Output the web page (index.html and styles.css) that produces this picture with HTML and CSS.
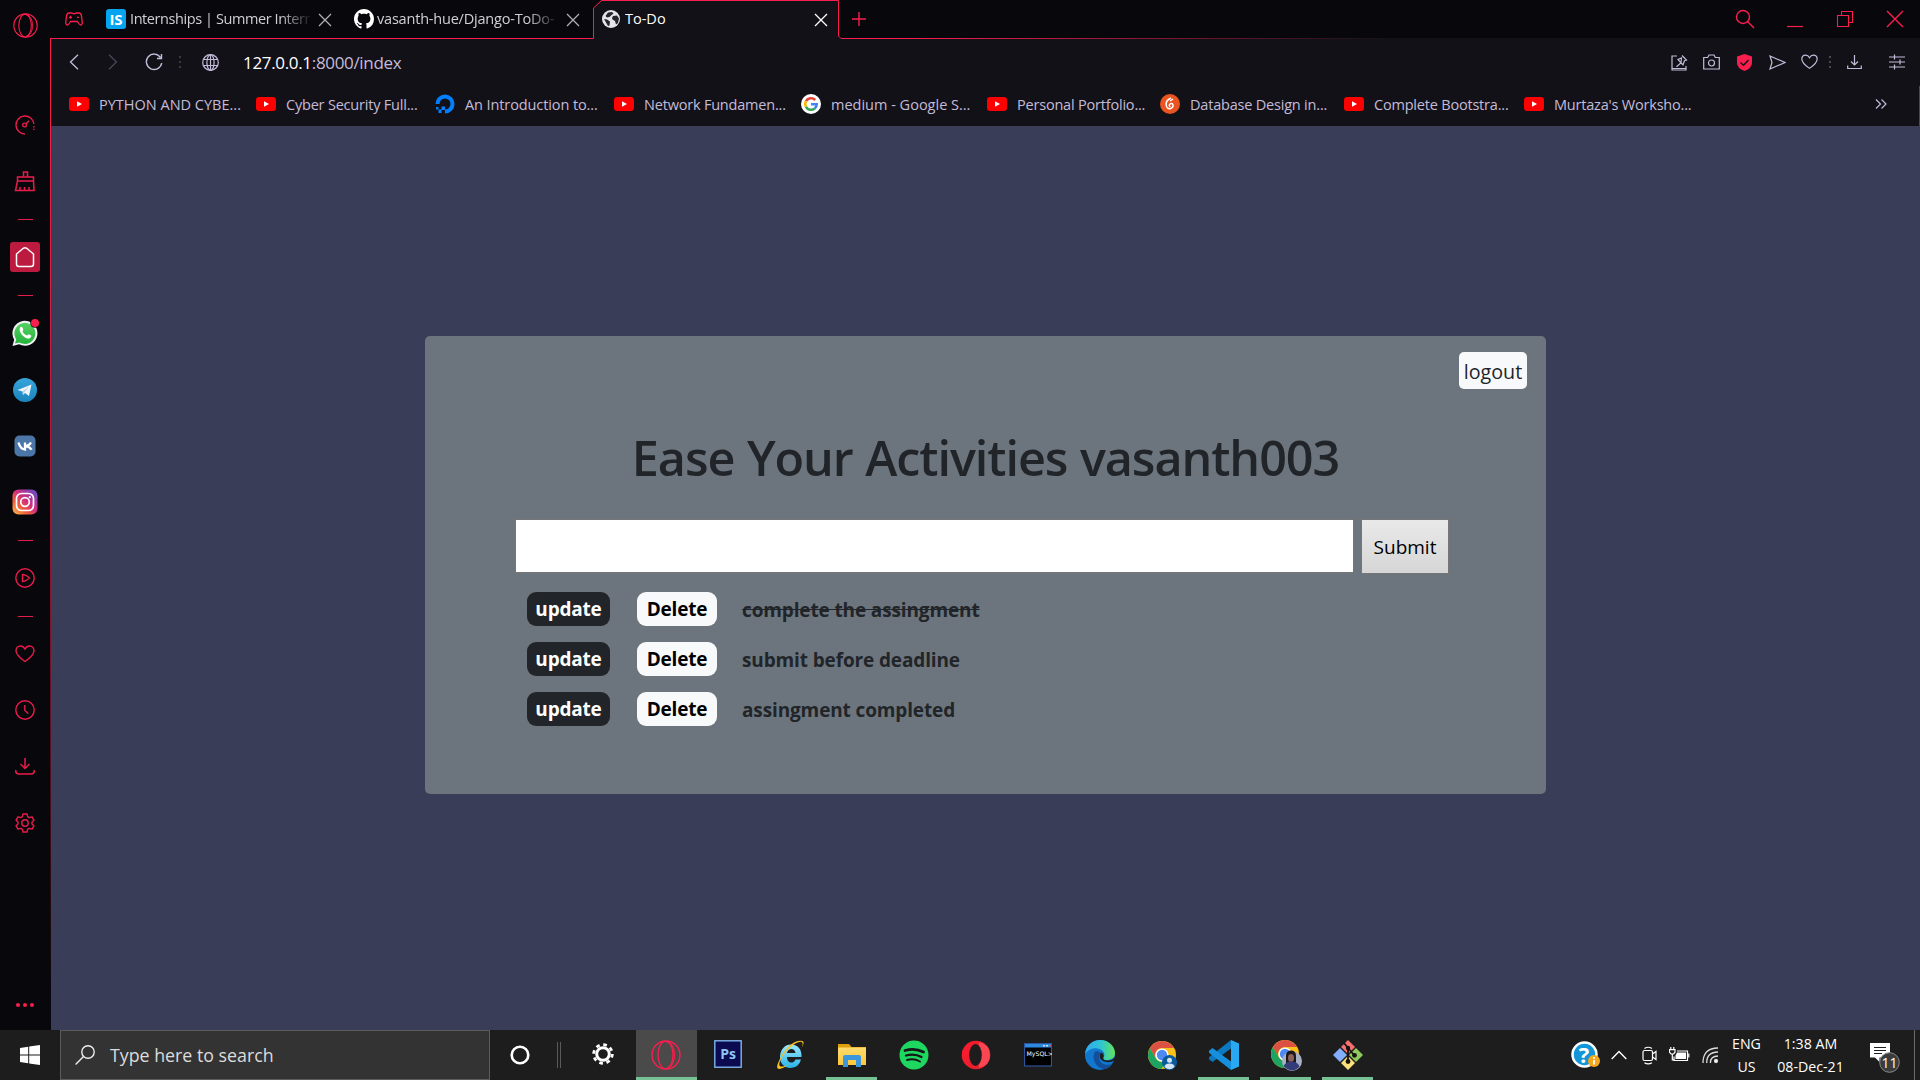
FILE: index.html
```html
<!DOCTYPE html>
<html lang="en">
<head>
<meta charset="utf-8">
<title>To-Do</title>
<link rel="stylesheet" href="styles.css">
</head>
<body>
<svg class="defs" width="0" height="0">
  <defs>
    <linearGradient id="ig" x1="0" y1="1" x2="1" y2="0"><stop offset="0" stop-color="#fdc04d"/><stop offset=".3" stop-color="#f2603a"/><stop offset=".55" stop-color="#d02d80"/><stop offset="1" stop-color="#5b4fd0"/></linearGradient>
    <linearGradient id="tg" x1="0" y1="0" x2="0" y2="1"><stop offset="0" stop-color="#37a5dc"/><stop offset="1" stop-color="#1b84bd"/></linearGradient>
    <linearGradient id="wa" x1="0" y1="0" x2="0" y2="1"><stop offset="0" stop-color="#57d163"/><stop offset="1" stop-color="#23b33a"/></linearGradient>
    <linearGradient id="hl" x1="0" y1="0" x2="1" y2="0"><stop offset="0" stop-color="#fa1e4e"/><stop offset=".64" stop-color="#fa1e4e"/><stop offset="1" stop-color="#fa1e4e" stop-opacity="0"/></linearGradient>
    <linearGradient id="vl" x1="0" y1="0" x2="0" y2="1"><stop offset="0" stop-color="#fa1e4e"/><stop offset=".25" stop-color="#e01c48"/><stop offset="1" stop-color="#fa1e4e" stop-opacity="0"/></linearGradient>
    <linearGradient id="op" x1="0" y1="0" x2="1" y2="1"><stop offset="0" stop-color="#ff1b2d"/><stop offset="1" stop-color="#e0202c"/></linearGradient>
    <linearGradient id="ed" x1="0" y1="0" x2="1" y2="0"><stop offset="0" stop-color="#35a8ea"/><stop offset=".5" stop-color="#2cc3d8"/><stop offset="1" stop-color="#62e35a"/></linearGradient>
    <linearGradient id="ie" x1="0" y1="0" x2="0" y2="1"><stop offset="0" stop-color="#9be8ff"/><stop offset="1" stop-color="#29b3ea"/></linearGradient>
    <linearGradient id="fo" x1="0" y1="0" x2="0" y2="1"><stop offset="0" stop-color="#ffdc6e"/><stop offset="1" stop-color="#fcc73a"/></linearGradient>
    <symbol id="yt" viewBox="0 0 20 14"><rect width="20" height="14" rx="3.2" fill="#f00"/><path d="M8 4.2v5.6L13 7z" fill="#fff"/></symbol>
    <symbol id="x" viewBox="0 0 14 14"><path d="M1 1l12 12M13 1L1 13" fill="none" stroke="currentColor" stroke-width="1.3"/></symbol>
    <symbol id="gx" viewBox="0 0 30 30"><g fill="none" stroke="#fa1e4e"><circle cx="15" cy="15" r="14" stroke-width="1.4"/><ellipse cx="14.500" cy="15" rx="7.500" ry="13.700" stroke-width="1.3"/><path d="M16 2.500C26 3 26 27 16 27.500" stroke-width="1.1"/></g></symbol>
    <symbol id="chrome" viewBox="0 0 28 28"><circle cx="14" cy="14" r="14" fill="#fbc116"/><path d="M1.900 7A14 14 0 0 1 26.100 7H14a7 7 0 0 0-6.500 9.500z" fill="#dd5144"/><path d="M1.900 7a14 14 0 0 0 11.500 21l6.600-10.500a7 7 0 0 1-12 0z" fill="#1da362"/><circle cx="14" cy="14" r="6.600" fill="#fff"/><circle cx="14" cy="14" r="5.200" fill="#4f8af4"/></symbol>
    <symbol id="heart" viewBox="0 0 20 18"><path d="M10 16.500C5 13 1 9.500 1 5.700 1 3 3 1 5.500 1 7.500 1 9 2.200 10 4c1-1.800 2.500-3 4.500-3C17 1 19 3 19 5.700c0 3.800-4 7.300-9 10.800z" fill="none" stroke="currentColor" stroke-width="1.400"/></symbol>
    <symbol id="gear" viewBox="0 0 20 20"><path d="M8 1h4l.6 2.700 1.700 1 2.700-.9 2 3.500-2 1.800v1.800l2 1.800-2 3.500-2.700-.9-1.700 1L12 19H8l-.6-2.700-1.700-1-2.700.9-2-3.500 2-1.800V9.100L1 7.300l2-3.500 2.700.9 1.700-1z" fill="none" stroke="currentColor" stroke-width="1.400" stroke-linejoin="round"/><circle cx="10" cy="10" r="3.200" fill="none" stroke="currentColor" stroke-width="1.400"/></symbol>
  </defs>
</svg>

<div class="screen">
  <aside class="sidebar">
    <div class="side side-logo"><svg width="25" height="25"><use href="#gx"/></svg></div>
    <div class="side after-logo"><svg width="20" height="20" viewBox="0 0 20 20" fill="none" stroke="currentColor" stroke-width="1.400"><path d="M10 19A9 9 0 1 1 18.900 9"/><path d="M18.900 11v4" stroke-dasharray="1.500 1.200"/><circle cx="9.500" cy="10" r="1.900"/><path d="M11 8.700l3-3"/></svg></div>
    <div class="side gap-18"><svg width="22" height="22" viewBox="0 0 22 22" fill="none" stroke="currentColor" stroke-width="1.500"><path d="M9.500 7V2h4v5M3.500 7h16v4h-16zM3.500 11L1.500 20.500H20l-.5-9.500M6 20v-3M10.500 20v-3M15 20v-3"/></svg></div>
    <div class="side"><i class="dash"></i></div>
    <div class="side"><div class="home"><svg width="20" height="22" viewBox="0 0 20 22"><path d="M8.300 2.300L1.500 8v10a2.500 2.500 0 0 0 2.500 2.500h12a2.500 2.500 0 0 0 2.500-2.500V8L11.700 2.300q-1.700-1.300-3.400 0z" fill="none" stroke="#fff" stroke-width="1.500"/></svg></div></div>
    <div class="side"><i class="dash"></i></div>
    <div class="side"><svg width="28" height="28" viewBox="0 0 28 28"><path d="M1.500 27l1.700-6.300A12.500 12.500 0 1 1 8 25.300z" fill="#f2f2f2"/><path d="M4 24.500l1.200-4.200A10.500 10.500 0 1 1 8.500 23.400z" fill="url(#wa)"/><path d="M9.300 8.300c1-1 1.800-.7 2.200.2l.8 1.900c.2.500-.9 1.500-.9 1.800 1.200 2.300 2.500 3.400 4.600 4.300.5 0 1.200-1.500 1.700-1.300l2.300 1.100c.8.400-.1 2.400-1.200 2.900-1.800.8-4.500-.2-6.700-2.300-2.500-2.300-4.500-5.800-2.800-8.600z" fill="#fff"/><circle cx="24" cy="4" r="4.800" fill="#08080c"/><circle cx="24" cy="4" r="4" fill="#fa1e4e"/></svg></div>
    <div class="side gap-19"><svg width="24" height="24"><circle cx="12" cy="12" r="12" fill="url(#tg)"/><path d="M4.500 12L18.500 6.500 16 18l-4-3-2 2-.5-3.500L4.500 12z" fill="#eef6fb"/><path d="M9.500 13.500l7-5.500-5.500 6.500-1 2.500z" fill="#b5cfe4"/></svg></div>
    <div class="side gap-18"><svg width="22" height="22"><rect x=".5" y=".5" width="21" height="21" rx="5" fill="#4d76a8"/><path d="M4.500 7.500q2 7 6.500 7v-7M11 11.500q4-.5 6-4M11.500 11q4.500 1 6 3.700" fill="none" stroke="#fff" stroke-width="2.300"/></svg></div>
    <div class="side gap-18"><svg width="26" height="26"><rect x=".5" y=".5" width="25" height="25" rx="6" fill="url(#ig)"/><rect x="4.500" y="4.500" width="17" height="17" rx="5" fill="none" stroke="#fff" stroke-width="1.700"/><circle cx="13" cy="13" r="4.300" fill="none" stroke="#fff" stroke-width="1.700"/><circle cx="17.800" cy="8.200" r="1.100" fill="#fff"/></svg></div>
    <div class="side"><i class="dash"></i></div>
    <div class="side"><svg width="20" height="20" viewBox="0 0 20 20" fill="none" stroke="currentColor" stroke-width="1.400"><circle cx="10" cy="10" r="9.200"/><path d="M7.500 6.500v7q3 0 7-3.500-4-3.500-7-3.500z"/></svg></div>
    <div class="side"><i class="dash"></i></div>
    <div class="side"><svg width="20" height="18"><use href="#heart"/></svg></div>
    <div class="side gap-18"><svg width="20" height="20" viewBox="0 0 20 20" fill="none" stroke="currentColor" stroke-width="1.400"><circle cx="10" cy="10" r="9.200"/><path d="M9.800 5v5.500l3.500 3"/></svg></div>
    <div class="side gap-18"><svg width="20" height="18" viewBox="0 0 20 18" fill="none" stroke="currentColor" stroke-width="1.500"><path d="M10 1v10M5.500 7l4.500 4.500L14.500 7M.8 13v1.500Q1 17 4 17h12q3 0 3.200-2.500V13"/></svg></div>
    <div class="side gap-19"><svg width="20" height="20"><use href="#gear"/></svg></div>
    <div class="side side-more"><svg width="20" height="6"><g fill="#fa1e4e"><circle cx="3" cy="3" r="2"/><circle cx="10" cy="3" r="2"/><circle cx="17" cy="3" r="2"/></g></svg></div>
  </aside>

  <header class="chrome">
    <div class="tabstrip">
      <div class="gamepad"><svg width="18" height="14" viewBox="0 0 18 14" fill="none" stroke="#fa1e4e" stroke-width="1.300"><path d="M4 1h3q2 1.500 4 0h3q2 0 2.500 3l.8 6.500Q17.200 13 15.500 13q-1 0-3-3.500h-7Q3.500 13 2.500 13 .8 13 .7 10.500L1.500 4Q2 1 4 1z"/><path d="M5.500 3.800v3M4 5.300h3M12 5.300h2"/></svg></div>
      <div class="tab tab-1"><span class="is-logo">IS</span><span class="tab-title fade">Internships | Summer Intern</span><span class="tab-close"><svg width="14" height="14"><use href="#x"/></svg></span></div>
      <div class="tab tab-2"><svg width="20" height="20" viewBox="0 0 16 16"><path fill="#fff" d="M8 0C3.580 0 0 3.580 0 8c0 3.540 2.290 6.530 5.470 7.590.4.070.55-.17.55-.38 0-.19-.01-.82-.01-1.490-2.010.37-2.530-.49-2.690-.94-.09-.23-.48-.94-.82-1.130-.28-.15-.68-.52-.01-.53.63-.01 1.080.58 1.230.82.72 1.210 1.870.87 2.330.66.070-.52.28-.87.510-1.070-1.780-.2-3.640-.89-3.640-3.950 0-.87.310-1.590.82-2.150-.08-.2-.36-1.020.08-2.120 0 0 .67-.21 2.200.82.64-.18 1.320-.27 2-.27s1.360.09 2 .27c1.530-1.040 2.200-.82 2.200-.82.44 1.100.16 1.920.08 2.120.51.56.82 1.270.82 2.150 0 3.070-1.870 3.750-3.650 3.950.29.25.54.73.54 1.480 0 1.070-.01 1.930-.01 2.200 0 .21.15.46.55.38A8 8 0 0 0 16 8c0-4.420-3.580-8-8-8z"/></svg><span class="tab-title fade">vasanth-hue/Django-ToDo-</span><span class="tab-close"><svg width="14" height="14"><use href="#x"/></svg></span></div>
      <div class="tab tab-3"><svg width="18" height="18" viewBox="0 0 18 18"><circle cx="9" cy="9" r="9" fill="#e6e6ea"/><path d="M6 2.500L10 2l1.500 1.500L9 5.500 7.500 7 5 7.500 3.500 6zM11 6l4-.5 2 3-1 4.500-2 1.500-1-3.500-2.500-1.500L10 8zM2 9l3 .5 3 2-.5 4L6 16z" fill="#26242c"/></svg><span class="tab-title on">To-Do</span><span class="tab-close on"><svg width="14" height="14"><use href="#x"/></svg></span></div>
      <div class="new-tab"><svg width="16" height="16"><path d="M8 1v14M1 8h14" stroke="#fa1e4e" stroke-width="1.400"/></svg></div>
      <div class="win-controls">
        <span><svg width="20" height="20" fill="none" stroke="#fa1e4e" stroke-width="1.400"><circle cx="8" cy="8" r="6.500"/><path d="M12.500 12.500L19 19"/></svg></span>
        <span><svg width="16" height="18"><path d="M0 16.500h16" stroke="#fa1e4e" stroke-width="1.200"/></svg></span>
        <span><svg width="18" height="18" fill="none" stroke="#fa1e4e" stroke-width="1.100"><path d="M1.500 5.500h11v11h-11zM5.500 5.500v-4h11v11h-4"/></svg></span>
        <span><svg width="18" height="18"><path d="M1 1l16 16M17 1L1 17" stroke="#fa1e4e" stroke-width="1.400"/></svg></span>
      </div>
    </div>
    <div class="toolbar">
      <span><svg width="10" height="16"><path d="M9 .8L1.500 8 9 15.200" fill="none" stroke="currentColor" stroke-width="1.300"/></svg></span>
      <span class="dim"><svg width="10" height="16"><path d="M1 .8L8.500 8 1 15.200" fill="none" stroke="currentColor" stroke-width="1.300"/></svg></span>
      <span><svg width="18" height="18" fill="none" stroke="currentColor" stroke-width="1.400"><path d="M15.500 4.500A7.700 7.700 0 1 0 16.700 10M16.500 1v4.500H12"/></svg></span>
      <span class="faint"><svg width="2" height="14"><path d="M1 1v13" stroke="currentColor" stroke-width="1.500" stroke-dasharray="2 3"/></svg></span>
      <span><svg width="17" height="17" viewBox="0 0 17 17" fill="none" stroke="currentColor" stroke-width="1.200"><circle cx="8.500" cy="8.500" r="7.800"/><ellipse cx="8.500" cy="8.500" rx="3.600" ry="7.800"/><path d="M8.500 .7v15.600M1.500 5.500h14M1.500 11.500h14"/></svg></span>
      <div class="url"><b>127.0.0.1</b>:8000/index</div>
      <span><svg width="17" height="17" fill="none" stroke="currentColor" stroke-width="1.200"><path d="M6 2H1v14h14v-4M1 14.500h14M11 1.500l4.500 4.500-2 .8-1.500 4-2-2-4.500 4M10 8.800L7 5.500l3.500-1.500z"/></svg></span>
      <span><svg width="17" height="16" fill="none" stroke="currentColor" stroke-width="1.200"><path d="M.7 3.500h4l1.300-2.500h5l1.300 2.500h4v11.500H.7z"/><circle cx="8.500" cy="9" r="3"/></svg></span>
      <span><svg width="15" height="17"><path d="M7.500 0L15 2.500v6.500q0 5-7.500 8Q0 14 0 9V2.500z" fill="#fa1e4e"/><path d="M3.500 8.500l3 2.700 5-5.200" fill="none" stroke="#131118" stroke-width="1.500"/></svg></span>
      <span><svg width="17" height="15" fill="none" stroke="currentColor" stroke-width="1.200"><path d="M1 1l15 6.500L1 14l2-6.500z"/></svg></span>
      <span><svg width="17" height="16"><use href="#heart"/></svg></span>
      <span class="faint"><svg width="2" height="14"><path d="M1 1v13" stroke="currentColor" stroke-width="2" stroke-dasharray="2 3"/></svg></span>
      <span><svg width="15" height="16" fill="none" stroke="currentColor" stroke-width="1.200"><path d="M7.500 1v10M4 7.500l3.500 3.500L11 7.500M.7 11.500v3h13.600v-3"/></svg></span>
      <span><svg width="16" height="16" fill="none" stroke="currentColor" stroke-width="1.200"><path d="M0 3h16M0 8h16M0 13h16M5.500 .5v5M11 5.500v5M5.500 10.500v5"/></svg></span>
    </div>
    <div class="bookmarks">
      <div class="bm"><svg width="20" height="14"><use href="#yt"/></svg><span>PYTHON AND CYBE...</span></div>
      <div class="bm"><svg width="20" height="14"><use href="#yt"/></svg><span>Cyber Security Full...</span></div>
      <div class="bm"><svg width="20" height="20"><path d="M10 17.500A7.500 7.500 0 1 0 2.500 10" fill="none" stroke="#0080ff" stroke-width="4"/><path d="M6.500 12.500H10V16H6.500zM3.500 15.500h3V19h-3zM1 13h2.500v2.500H1z" fill="#0080ff"/></svg><span>An Introduction to...</span></div>
      <div class="bm"><svg width="20" height="14"><use href="#yt"/></svg><span>Network Fundamen...</span></div>
      <div class="bm"><svg width="20" height="20"><circle cx="10" cy="10" r="10" fill="#fff"/><g fill="none" stroke-width="2.600"><path d="M14.200 6A5.800 5.800 0 0 0 5 7.200" stroke="#ea4335"/><path d="M5 7.200a5.800 5.800 0 0 0 0 5.600" stroke="#fbbc05"/><path d="M5 12.800a5.800 5.800 0 0 0 8.700 1.700" stroke="#34a853"/><path d="M13.700 14.500A5.500 5.500 0 0 0 15.700 10.200H10" stroke="#4285f4"/></g></svg><span>medium - Google S...</span></div>
      <div class="bm"><svg width="20" height="14"><use href="#yt"/></svg><span>Personal Portfolio...</span></div>
      <div class="bm"><svg width="20" height="20"><circle cx="10" cy="10" r="10" fill="#e95420"/><path d="M11 4Q5.500 6.500 6.200 11q.8 4.500 4.500 3.500 3-1.200 2.300-3.800-1-2.200-3-.7-1.500 1.500.3 3M13 5l-3 2" fill="none" stroke="#fff" stroke-width="1.500"/></svg><span>Database Design in...</span></div>
      <div class="bm"><svg width="20" height="14"><use href="#yt"/></svg><span>Complete Bootstra...</span></div>
      <div class="bm"><svg width="20" height="14"><use href="#yt"/></svg><span>Murtaza's Worksho...</span></div>
      <div class="bm-more"><svg width="12" height="10"><path d="M1 .5L5.500 5 1 9.500M6.500 .5L11 5 6.500 9.500" fill="none" stroke="currentColor" stroke-width="1.200"/></svg></div>
    </div>
  </header>

  <main class="page">
    <section class="card">
      <div class="card-top"><a class="logout">logout</a></div>
      <h1>Ease Your Activities vasanth003</h1>
      <form class="entry"><input type="text" class="field"><button type="button" class="submit">Submit</button></form>
      <ul class="tasks">
        <li><a class="btn update">update</a><a class="btn delete">Delete</a><s class="task">complete the assingment</s></li>
        <li><a class="btn update">update</a><a class="btn delete">Delete</a><span class="task">submit before deadline</span></li>
        <li><a class="btn update">update</a><a class="btn delete">Delete</a><span class="task">assingment completed</span></li>
      </ul>
    </section>
  </main>

  <footer class="taskbar">
    <div class="start"><svg width="20" height="20"><path d="M0 3l8.200-1.200v7.700H0zM9.200 1.600L20 0v9.500H9.200zM0 10.500h8.200v7.700L0 17zM9.200 10.500H20V20L9.200 18.400z" fill="#fff"/></svg></div>
    <div class="search"><svg width="20" height="20" fill="none" stroke="#eee" stroke-width="1.400"><circle cx="13" cy="7" r="6.200"/><path d="M8.500 11.500L.6 19.400"/></svg><span>Type here to search</span></div>
    <div class="cortana"><svg width="20" height="20"><circle cx="10" cy="10" r="8.300" fill="none" stroke="#fff" stroke-width="2.600"/></svg></div>
    <div class="divider"><svg width="4" height="26"><path d="M.5 0v26M3.500 0v26" stroke="#5a5a5a"/></svg></div>
    <div class="settings"><svg width="22" height="22"><circle cx="11" cy="11" r="6.300" fill="none" stroke="#fff" stroke-width="3"/><circle cx="11" cy="11" r="9.300" fill="none" stroke="#fff" stroke-width="2.800" stroke-dasharray="3.650 3.650"/></svg></div>
    <div class="apps">
      <div class="app active wide"><svg width="30" height="30"><use href="#gx"/></svg></div>
      <div class="app up"><svg width="28" height="28" viewBox="0 0 28 28"><rect x=".8" y=".8" width="26.400" height="26.400" fill="#0c0a50" stroke="#7fb6ee" stroke-width="1.400"/><text x="14" y="19" text-anchor="middle" class="ps">Ps</text></svg></div>
      <div class="app"><svg width="30" height="30" viewBox="0 0 30 30"><path d="M26 19.500q-2 8-10.500 8.500C8 28 4.500 22 5 16 5.700 9 10 4.500 16 4.500c7 0 11 5 10.500 12.500H12c0 7 7 7 8.500 2.500zM12 13h8.500c-.5-5.500-7.500-5.500-8.500 0z" fill="url(#ie)"/><path d="M4 21C-2 33 8 29 14 24 5 29 2 26.500 6 19 11 9 25-2 27.500 3q.5 2-1 5Q32-1 23 1C15 3 7 13 4 21z" fill="#f9c31d"/></svg></div>
      <div class="app run"><svg width="28" height="24"><path d="M0 1h11l2.500 3H28v6H0z" fill="#e0a00e"/><path d="M0 4.500h28V22H0z" fill="url(#fo)"/><path d="M5 24V14q0-2 2-2h14q2 0 2 2v10h-5v-7h-8v7z" fill="#3a96dd"/></svg></div>
      <div class="app"><svg width="30" height="30"><circle cx="15" cy="15" r="14.500" fill="#1ed760"/><g fill="none" stroke="#161616" stroke-linecap="round"><path d="M6 10.500q10-3 18.500 1.500" stroke-width="2.800"/><path d="M7 15.500q8.500-2.500 15.500 1.500" stroke-width="2.300"/><path d="M8 20q7-2 13 1.500" stroke-width="1.900"/></g></svg></div>
      <div class="app"><svg width="30" height="30"><ellipse cx="15" cy="15" rx="14.300" ry="14.300" fill="url(#op)"/><path d="M18 2q11 2.500 11 13T18 28z" fill="#fa4552"/><ellipse cx="14.500" cy="15" rx="6.300" ry="11" fill="#1d1d1d"/></svg></div>
      <div class="app"><svg width="28" height="24"><rect x=".5" y=".5" width="27" height="22.500" fill="#000" stroke="#2c559c" stroke-width="1.200"/><path d="M1 1h26v3.500H1z" fill="#2c8ae0"/><path d="M19 2h2v1.500h-2zM22 2h2v1.500h-2z" fill="#bfe0ff"/><path d="M25 2h2v1.500h-2z" fill="#e0523c"/><text x="2.500" y="13" class="sql">MySQL&gt;</text></svg></div>
      <div class="app"><svg width="30" height="30" viewBox="0 0 30 30"><circle cx="15" cy="15" r="15" fill="#1177cf"/><path d="M0 14C1 5 8 0 15 0c9 0 15 6.500 15 13 0 5-4 7-8 7-4.500 0-4-2-3-3.500C22 10 8 3 0 14z" fill="url(#ed)"/><path d="M9.500 12.500C6 20 13 29.500 20 29q5-1 7.500-5.500c-6 3.500-14 0-13.500-7 .2-2 .8-3 1.800-3.700C14 11.500 11 10.500 9.500 12.500z" fill="#134f99"/><path d="M16 12.500q-4 5.500 3 9 6 2 11-1.500V17q-3 4-8 3.500-5-.3-3.500-3.500 1-3-2.500-4.500z" fill="#1d1d1d"/></svg></div>
      <div class="app"><svg width="30" height="30" viewBox="0 0 30 30"><use href="#chrome" x="1" y="1" width="28" height="28"/><circle cx="22.500" cy="22.500" r="7.500" fill="#0a5a9c"/><circle cx="22.500" cy="20.300" r="2.500" fill="#cfe4f5"/><path d="M17.500 27q0-3.500 5-3.500t5 3.500q-5 4.500-10 0z" fill="#cfe4f5"/></svg></div>
      <div class="app run"><svg width="30" height="30" viewBox="0 0 30 30"><path d="M22 0l8 3.500v23L22 30z" fill="#29a9f2"/><path d="M22 0v8.500L3.500 22 0 19.200v-2z" fill="#0b78bf"/><path d="M22 30v-8.500L3.500 8 0 10.800v2z" fill="#1690dc"/></svg></div>
      <div class="app run"><svg width="32" height="32" viewBox="0 0 32 32"><use href="#chrome" x="1" y="1" width="28" height="28"/><circle cx="22" cy="22" r="10" fill="#aab0c4"/><path d="M16 17q0-5.500 5-5.500T26 17v7H16z" fill="#1c1718"/><ellipse cx="21" cy="19" rx="3" ry="4" fill="#8d625a"/><path d="M13.500 27q3-5 8-4.500 6 0 8 5-7.500 8-16-.5z" fill="#333c78"/></svg></div>
      <div class="app run"><svg width="30" height="30" viewBox="0 0 30 30"><path d="M15 0l7 7-7 7-7-7z" fill="#f87171"/><path d="M7 8l7 7-7 7-7-7z" fill="#83aefb"/><path d="M23 8l7 7-7 7-7-7z" fill="#8ccb5c"/><path d="M15 16l7 7-7 7-7-7z" fill="#fbe27a"/><path d="M11 3l4 5v14M15 8l6 7" fill="none" stroke="#17120f" stroke-width="1.800"/><circle cx="15" cy="8" r="2.200" fill="#17120f"/><circle cx="15" cy="21.500" r="2.400" fill="#17120f"/><circle cx="21.500" cy="15.300" r="2.400" fill="#17120f"/></svg></div>
    </div>
    <div class="tray">
      <span class="t-help"><svg width="30" height="28"><circle cx="13.500" cy="13.500" r="12" fill="#1296d8" stroke="#fff" stroke-width="2.500"/><text x="13" y="21.500" text-anchor="middle" class="q">?</text><circle cx="23" cy="20" r="6" fill="#f5a81c"/><path d="M23 19v4.500M23 16v1.700" stroke="#fff" stroke-width="1.800"/></svg></span>
      <span class="t-chev"><svg width="16" height="10"><path d="M.7 9L8 1.500 15.300 9" fill="none" stroke="#fff" stroke-width="1.400"/></svg></span>
      <span class="t-cam"><svg width="15" height="19" fill="none" stroke="#fff" stroke-width="1.200"><rect x="1" y="4.500" width="9.500" height="10" rx="1.500"/><path d="M10.500 8l3.500-2.500v8L10.500 11M2.500 2.500q3.500-2.500 7.500 0M2.500 16.700q3.500 2.500 7.500 0"/></svg></span>
      <span class="t-bat"><svg width="21" height="16" fill="none" stroke="#fff" stroke-width="1.200"><path d="M8 4h10.500v9.500H5v-4"/><path d="M8 5.500h9v6.500H6.500V8.500z" fill="#fff" stroke="none"/><path d="M19.800 6.500v4M1.800 0v2.500M4.800 0v2.500M.5 2.700h5.500v2.500L4.500 7h-2.500L.5 5.200zM3.300 7v6H6"/></svg></span>
      <span class="t-wifi"><svg width="17" height="17" fill="none" stroke="#ddd" stroke-width="1.300"><path d="M1 16Q1 1 16 1M4.700 16Q4.700 5 16 5M8.400 16Q8.400 9 16 9"/><circle cx="14" cy="14" r="1.500" fill="#fff"/></svg></span>
      <span class="stack lang"><span>ENG</span><span>US</span></span>
      <span class="stack clock"><span>1:38 AM</span><span>08-Dec-21</span></span>
      <span class="t-note"><svg width="32" height="32"><path d="M1 1h20v14.500H10.500V20L6 15.500H1z" fill="#fff"/><path d="M5 5.500h12M5 8.500h12M5 11.500h8" stroke="#1d1d1d" stroke-width="1.200"/><circle cx="20.500" cy="20.500" r="9.800" fill="#3c3c3c" stroke="#8a8a8a"/><text x="20.500" y="25.500" text-anchor="middle" class="badge">11</text></svg></span>
    </div>
  </footer>

  <svg class="outline" width="1870" height="992" fill="none"><rect x="0" y="38" width="1" height="954" fill="url(#vl)"/><path d="M0 38.500H543.500V8L551.500 .5H788.500V36L791 38.500H1340" stroke="url(#hl)"/></svg>
</div>
</body>
</html>
```
FILE: styles.css
```css
* { box-sizing: border-box; }
body { margin: 0; background: #1d1d1d; font-family: "Open Sans", "Noto Sans", sans-serif; }
svg { display: block; flex: none; }
.defs { position: absolute; }

.screen {
  position: relative;
  width: 1920px;
  height: 1080px;
  display: grid;
  grid-template: 126px 904px 50px / 51px 1fr;
  overflow: hidden;
}
.outline { position: absolute; left: 50px; top: 0; pointer-events: none; }

.sidebar {
  grid-row: 1 / 3;
  display: flex;
  flex-direction: column;
  padding-bottom: 6px;
  background: #08080c;
  color: #e81c4a;
}
.side { height: 38px; width: 49px; display: flex; flex: none; align-items: center; justify-content: center; }
.side-logo { height: 51px; width: 51px; }
.after-logo { margin-top: 55px; }
.gap-18 { margin-top: 18px; }
.gap-19 { margin-top: 19px; }
.side-more { margin-top: auto; }
.dash { width: 15px; height: 1px; background: #e81c4a; margin-left: 2px; }
.home { width: 30px; height: 30px; border-radius: 3px; background: #bd1a3f; display: flex; align-items: center; justify-content: center; }

.chrome { display: grid; grid-template-rows: 38px 48px 40px; background: #131118; color: #c3bcd8; }
.tabstrip { display: grid; grid-template-columns: 46px 248px 248px 246px 39px 1fr; background: #08080c; }
.gamepad, .new-tab, .tab-close, .toolbar > span, .win-controls span { display: flex; align-items: center; justify-content: center; }
.tab { display: flex; align-items: center; padding-left: 9px; }
.tab-3 { background: linear-gradient(135deg, #08080c 6px, #131118 6px); }
.is-logo { width: 20px; height: 20px; border-radius: 3px; background: #04a4f0; color: #fff; font: 700 15px/20px "Open Sans", sans-serif; text-align: center; }
.tab-title { width: 180px; margin-left: 4px; font-size: 14.500px; line-height: 20px; white-space: nowrap; overflow: hidden; color: #d0d0d4; }
.tab-1 .tab-title { letter-spacing: -.42px; }
.tab-2 .tab-title { margin-left: 3px; width: 181px; letter-spacing: -.2px; }
.tab-title.on { color: #fff; margin-left: 5px; }
.fade { -webkit-mask-image: linear-gradient(90deg, #000 150px, transparent 183px); mask-image: linear-gradient(90deg, #000 150px, transparent 183px); }
.tab-close { width: 30px; color: #b0b0b4; padding-top: 2px; }
.tab-close.on { color: #fff; margin-left: 1px; }
.win-controls { display: grid; grid-template-columns: 50px 50px 50px 50px; justify-content: end; }

.toolbar { display: grid; grid-template-columns: 45px 33px 49px 4px 57px 1fr 32px 33px 33px 32px 32px 10px 38px 47px; align-items: center; }
.dim, .faint { color: #4b4757; }
.url { font-size: 17px; letter-spacing: -.33px; line-height: 24px; white-space: nowrap; padding: 1px 0 0 4px; }
.url b { font-weight: 400; color: #fff; }
.bookmarks { display: grid; grid-template-columns: 187px 179px 179px 187px 186px 173px 184px 180px 1fr 76px; padding-left: 18px; align-items: center; font-size: 14.500px; letter-spacing: -.2px; border-right: 1px solid #4a4950; }
.bm { display: flex; align-items: center; gap: 10px; white-space: nowrap; padding-bottom: 4px; }
.bm:nth-child(1) { letter-spacing: 0; }
.bm:nth-child(5) { letter-spacing: 0; }
.bm:nth-child(3) { letter-spacing: -.1px; }
.bm-more { justify-self: center; padding-bottom: 4px; }

.page { background: #3a3d57; }
.card { width: 1121px; height: 458px; margin: 210px 0 0 374px; border-radius: 5px; background: #6c757d; color: #212529; }
.card-top { display: flex; justify-content: flex-end; padding: 16px 19px 0 0; }
.logout { width: 68px; height: 37px; border-radius: 5px; background: #f8f9fa; font-size: 19.700px; line-height: 40px; text-align: center; }
h1 { margin: 31px 0 0; font-size: 48.500px; letter-spacing: -1.050px; word-spacing: 1px; line-height: 75px; font-weight: 600; text-align: center; white-space: nowrap; }
.entry { display: flex; gap: 7px; margin: 24px 0 0 90px; }
.field { width: 839px; height: 54px; border: 1px solid #767676; background: #fff; padding: 0; }
.submit { width: 88px; height: 55px; border: 1px solid #767676; background: linear-gradient(#e9e9e9, #d6d6d6); font: 19px "Open Sans", sans-serif; color: #000; padding: 0; }
.tasks { list-style: none; margin: 10px 0 0; padding: 0 0 0 102px; }
.tasks li { display: flex; align-items: center; height: 50px; font-size: 19px; letter-spacing: -.2px; font-weight: 700; white-space: nowrap; }
.btn { height: 34px; border-radius: 9px; line-height: 34px; text-align: center; }
.task { letter-spacing: -.13px; padding-top: 2px; }
.update { width: 83px; background: #212529; color: #fff; }
.delete { width: 80px; margin: 0 25px 0 27px; background: #f8f9fa; color: #000; }

.taskbar { grid-column: 1 / 3; display: grid; grid-template: 50px / 60px 430px 60px 17px 69px 1fr auto; background: #1d1d1d; color: #fff; }
.start, .cortana, .divider, .settings, .app { display: flex; align-items: center; justify-content: center; }
.settings { padding: 0 0 2px 3px; }
.search { display: flex; align-items: center; gap: 15px; padding-left: 14px; background: #333; border: 1px solid #5c5c5c; color: #dcdcdc; font-size: 17.800px; }
.apps { display: flex; gap: 11px; }
.app { width: 51px; flex: none; border-bottom: 3px solid transparent; padding-top: 3px; }
.up { padding-top: 0; }
.wide { width: 61px; margin-right: -6px; padding-right: 1px; }
.active { background: #4a4a4a; border-color: #76c294; }
.run { border-color: #76c294; }
.ps { font: 700 14px "Open Sans", sans-serif; fill: #8ec6f5; }
.sql { font: 6.200px "DejaVu Sans", sans-serif; fill: #fff; }
.q { font: 700 22px "Open Sans", sans-serif; fill: #fff; }
.badge { font: 14px "Open Sans", sans-serif; fill: #fff; }
.tray { display: flex; align-items: center; margin-right: 5px; border-right: 1px solid #6a6a6a; font-size: 14.200px; }
.stack { display: flex; flex-direction: column; align-items: center; line-height: 23px; white-space: nowrap; }
.t-help { margin-right: 10px; }
.t-chev { margin-right: 15px; }
.t-cam { margin-right: 12px; }
.t-bat { margin-right: 12px; }
.t-wifi { margin-right: 13px; }
.lang { width: 29px; }
.clock { width: 69px; margin: 0 24px 0 15px; }
.t-note { margin: 6px 13px 0 0; }
```
